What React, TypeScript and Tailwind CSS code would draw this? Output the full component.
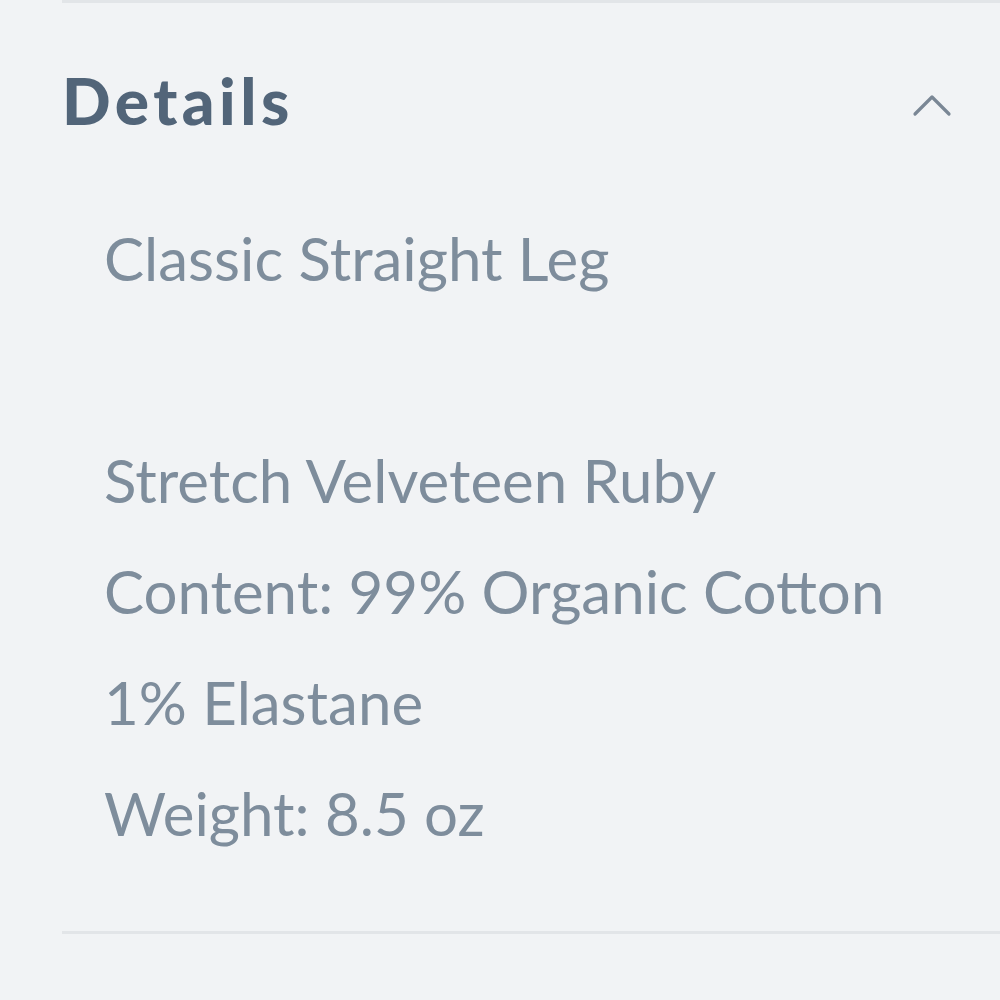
import React from "react";

const lines = [
  "Classic Straight Leg",
  "",
  "Stretch Velveteen Ruby",
  "Content: 99% Organic Cotton",
  "1% Elastane",
  "Weight: 8.5 oz",
];

export default function App() {
  return (
    <div
      className="w-[1000px] h-[1000px] bg-[#f1f3f5] overflow-hidden"
      style={{ fontFamily: "Lato, 'Open Sans', sans-serif" }}
    >
      <div className="ml-[62px] border-t-[3px] border-[#e2e5e8]">
        {/* Header */}
        <div className="flex items-center justify-between pt-[60px] pr-[48px]">
          <h2 className="text-[64px] leading-[76px] font-black tracking-[0.07em] text-[#526579]">
            Details
          </h2>
          <svg width="40" height="24" viewBox="0 0 40 24" fill="none" className="mt-[8px]">
            <path d="M3 21 L20 4 L37 21" stroke="#7a8795" strokeWidth="3.2" strokeLinecap="round" strokeLinejoin="round" />
          </svg>
        </div>

        {/* Body */}
        <div className="pl-[42px] pt-[64px] pb-[62px] text-[60px] leading-[111px] text-[#7e8d9c]">
          {lines.map((l, i) => (
            <p key={i} className="h-[111px]">{l}</p>
          ))}
        </div>
      </div>
      <div className="ml-[62px] border-t-[3px] border-[#e2e5e8]" />
    </div>
  );
}
